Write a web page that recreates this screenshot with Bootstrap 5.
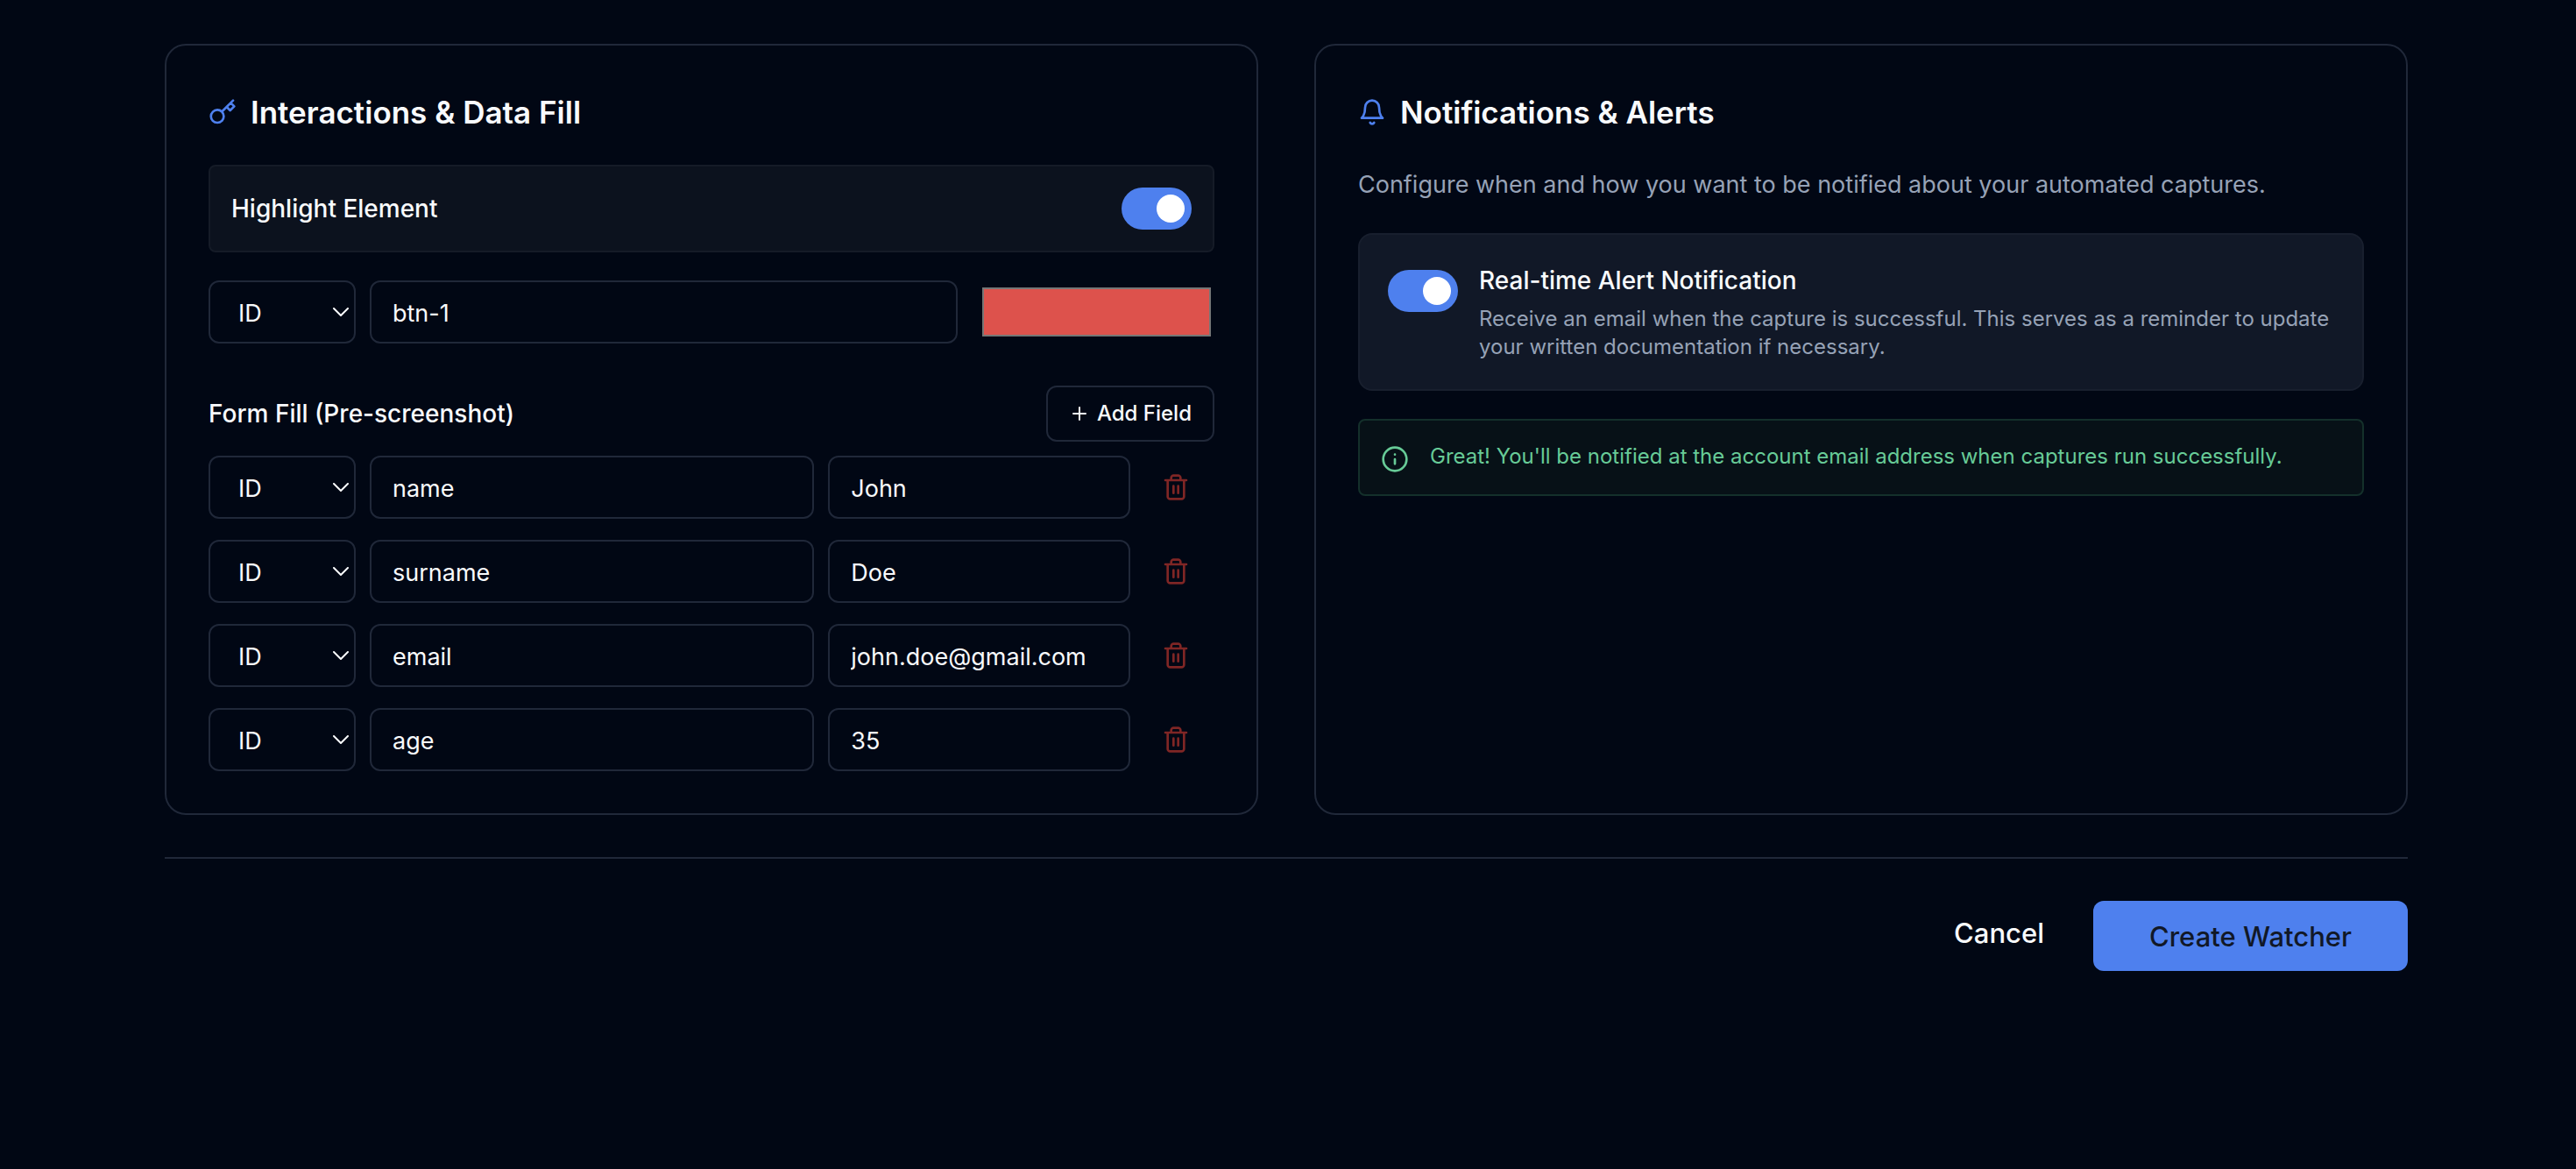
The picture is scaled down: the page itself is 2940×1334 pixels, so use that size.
<!DOCTYPE html>
<html lang="en" data-bs-theme="dark">
<head>
<meta charset="utf-8">
<meta name="viewport" content="width=device-width, initial-scale=1">
<title>Create Watcher</title>
<link href="https://cdn.jsdelivr.net/npm/bootstrap@5.3.0/dist/css/bootstrap.min.css" rel="stylesheet">
<style>
:root{--page:#010714;--line:#202839;--ink:#f8fafc;--soft:#96a2b6;--brand:#4e80ee}
body{background:var(--page);color:var(--ink);font-family:Inter,"Liberation Sans",sans-serif;font-size:28px;line-height:40px}
.page-shell{padding:50px 4px 48px 0}
.page-wrap{max-width:2560px}
.panels{--bs-gutter-x:64px;--bs-gutter-y:48px}
.panel{background:var(--page);border:2px solid var(--line);border-radius:24px}
.panel>.card-body{padding:48px}
.panel-title{gap:16px;font-size:35px;line-height:56px;font-weight:600;margin-bottom:32px;color:var(--ink)}
.panel-title svg{color:var(--brand)}
svg{flex:none;fill:none;stroke:currentColor;stroke-width:2;stroke-linecap:round;stroke-linejoin:round}
.toggle-row{background:#0c121e;border:2px solid #151b27;border-radius:8px;padding:24px;margin-bottom:32px;font-weight:500}
.form-switch .form-check-input.toggle{float:none;width:80px;height:48px;margin:0;border:0;border-radius:48px;background-color:var(--brand);background-size:48px 48px;background-image:url("data:image/svg+xml,%3csvg xmlns='http://www.w3.org/2000/svg' viewBox='0 0 48 48'%3e%3ccircle cx='24' cy='24' r='16' fill='%23fff'/%3e%3c/svg%3e")}
.field-row{gap:16px}
.form-control.field,.form-select.field{height:72px;padding:2px 24px 0;border:2px solid var(--line);border-radius:12px;background-color:var(--page);color:var(--ink);font-size:27px;line-height:40px;min-width:0}
.form-select.field{flex:none;width:168px;padding:4px 32px 0;background-size:18px 10px;background-position:right 6px center;background-image:url("data:image/svg+xml,%3csvg xmlns='http://www.w3.org/2000/svg' viewBox='0 0 18 10'%3e%3cpath fill='none' stroke='%23f8fafc' stroke-width='2' stroke-linecap='round' stroke-linejoin='round' d='M1 1l8 8 8-8'/%3e%3c/svg%3e")}
.field-target{flex:19 1 0}
.swatch-cell{flex:8 1 0;padding:0 4px 0 12px}
.swatch{width:100%;height:56px;padding:0;border:0;border-radius:0;background:none}
.swatch::-webkit-color-swatch-wrapper{padding:0}
.swatch::-webkit-color-swatch{border:2px solid #767676!important;border-radius:0}
.fill-head{margin:48px 0 16px;font-weight:500}
.btn-add{height:64px;padding:0 24px;gap:8px;border:2px solid var(--line);border-radius:12px;font-size:24px;line-height:32px;font-weight:500;color:var(--ink)}
.fill-rows{gap:24px}
.field-name{flex:14 1 0}
.field-value{flex:9 1 0}
.btn-trash{width:72px;height:72px;padding:0;margin-right:8px;border:0;color:#7f2625}
.intro{font-size:27px;line-height:46px;margin-bottom:32px;color:var(--soft)}
.notice{gap:24px;background:#111827;border:2px solid #181f2e;border-radius:16px;padding:32px;margin-bottom:32px}
.notice .toggle-holder{padding-top:8px}
.notice-title{font-weight:500}
.notice-text{margin-top:8px;font-size:24px;line-height:32px;color:var(--soft)}
.ok-note{gap:24px;background:#071117;border:2px solid #14302b;border-radius:8px;padding:24px;margin:0;font-size:24px;line-height:34px;color:#67cb97}
.ok-note svg{margin-top:4px}
.page-foot{gap:56px;margin-top:48px;padding-top:48px;border-top:2px solid var(--line)}
.btn-cancel{padding:0;border:0;font-size:31px;line-height:74px;font-weight:500;color:var(--ink)}
.btn-create{height:80px;padding:2px 64px 0;border:0;border-radius:12px;background:var(--brand);color:#111827;font-size:31px;line-height:48px;font-weight:500}
</style>
</head>
<body>
<svg class="d-none" aria-hidden="true">
  <symbol id="trash" viewBox="0 0 24 24"><path d="M3 6h18M19 6v14c0 1-1 2-2 2H7c-1 0-2-1-2-2V6M8 6V4c0-1 1-2 2-2h4c1 0 2 1 2 2v2M10 11v6M14 11v6"/></symbol>
</svg>
<main class="page-shell">
<form class="page-wrap mx-auto" onsubmit="return false">
  <div class="row panels">
    <section class="col-12 col-lg-6">
      <div class="card panel h-100"><div class="card-body">
        <h2 class="panel-title d-flex align-items-center">
          <svg width="32" height="32" viewBox="0 0 24 24" aria-hidden="true"><path d="m21 2-2 2m-7.61 7.61a5.5 5.5 0 1 1-7.778 7.778 5.5 5.5 0 0 1 7.777-7.777zm0 0L15.5 7.5m0 0 3 3L22 7l-3-3m-3.5 3.5L19 4"/></svg>
          <span>Interactions &amp; Data Fill</span>
        </h2>
        <div class="toggle-row form-switch d-flex align-items-center justify-content-between">
          <label for="highlight">Highlight Element</label>
          <input class="form-check-input toggle" type="checkbox" role="switch" id="highlight" checked>
        </div>
        <div class="field-row d-flex align-items-center">
          <select class="form-select field" aria-label="Highlight selector type"><option>ID</option><option>Class</option></select>
          <input class="form-control field field-target" type="text" value="btn-1" aria-label="Highlight selector">
          <div class="swatch-cell"><input class="swatch d-block" type="color" value="#dd524c" aria-label="Highlight colour"></div>
        </div>
        <div class="fill-head d-flex align-items-center justify-content-between">
          <span>Form Fill (Pre-screenshot)</span>
          <button type="button" class="btn btn-add d-flex align-items-center">
            <svg width="24" height="24" viewBox="0 0 24 24" aria-hidden="true"><path d="M5 12h14M12 5v14"/></svg>
            <span>Add Field</span>
          </button>
        </div>
        <div class="fill-rows d-flex flex-column">
          <div class="field-row d-flex align-items-center">
            <select class="form-select field" aria-label="Field 1 selector type"><option>ID</option><option>Class</option></select>
            <input class="form-control field field-name" type="text" value="name" aria-label="Field 1 selector">
            <input class="form-control field field-value" type="text" value="John" aria-label="Field 1 value">
            <button type="button" class="btn btn-trash flex-shrink-0" aria-label="Remove field 1"><svg width="32" height="32" aria-hidden="true"><use href="#trash"/></svg></button>
          </div>
          <div class="field-row d-flex align-items-center">
            <select class="form-select field" aria-label="Field 2 selector type"><option>ID</option><option>Class</option></select>
            <input class="form-control field field-name" type="text" value="surname" aria-label="Field 2 selector">
            <input class="form-control field field-value" type="text" value="Doe" aria-label="Field 2 value">
            <button type="button" class="btn btn-trash flex-shrink-0" aria-label="Remove field 2"><svg width="32" height="32" aria-hidden="true"><use href="#trash"/></svg></button>
          </div>
          <div class="field-row d-flex align-items-center">
            <select class="form-select field" aria-label="Field 3 selector type"><option>ID</option><option>Class</option></select>
            <input class="form-control field field-name" type="text" value="email" aria-label="Field 3 selector">
            <input class="form-control field field-value" type="text" value="john.doe@gmail.com" aria-label="Field 3 value">
            <button type="button" class="btn btn-trash flex-shrink-0" aria-label="Remove field 3"><svg width="32" height="32" aria-hidden="true"><use href="#trash"/></svg></button>
          </div>
          <div class="field-row d-flex align-items-center">
            <select class="form-select field" aria-label="Field 4 selector type"><option>ID</option><option>Class</option></select>
            <input class="form-control field field-name" type="text" value="age" aria-label="Field 4 selector">
            <input class="form-control field field-value" type="text" value="35" aria-label="Field 4 value">
            <button type="button" class="btn btn-trash flex-shrink-0" aria-label="Remove field 4"><svg width="32" height="32" aria-hidden="true"><use href="#trash"/></svg></button>
          </div>
        </div>
      </div></div>
    </section>
    <section class="col-12 col-lg-6">
      <div class="card panel h-100"><div class="card-body">
        <h2 class="panel-title d-flex align-items-center">
          <svg width="32" height="32" viewBox="0 0 24 24" aria-hidden="true"><path d="M6 8a6 6 0 0 1 12 0c0 7 3 9 3 9H3s3-2 3-9M10.3 21a1.94 1.94 0 0 0 3.4 0"/></svg>
          <span>Notifications &amp; Alerts</span>
        </h2>
        <p class="intro">Configure when and how you want to be notified about your automated captures.</p>
        <div class="notice form-switch d-flex align-items-start">
          <div class="toggle-holder d-flex"><input class="form-check-input toggle" type="checkbox" role="switch" id="realtime" aria-describedby="realtime-text" checked></div>
          <div>
            <label class="notice-title d-block" for="realtime">Real-time Alert Notification</label>
            <div class="notice-text" id="realtime-text">Receive an email when the capture is successful. This serves as a reminder to update your written documentation if necessary.</div>
          </div>
        </div>
        <div class="ok-note d-flex align-items-start" role="status">
          <svg width="32" height="32" viewBox="0 0 24 24" aria-hidden="true"><circle cx="12" cy="12" r="10"/><path d="M12 16v-4M12 8h.01"/></svg>
          <span>Great! You'll be notified at the account email address when captures run successfully.</span>
        </div>
      </div></div>
    </section>
  </div>
  <div class="page-foot d-flex justify-content-end align-items-start">
    <button type="button" class="btn btn-cancel">Cancel</button>
    <button type="submit" class="btn btn-create">Create Watcher</button>
  </div>
</form>
</main>
<script src="https://cdn.jsdelivr.net/npm/bootstrap@5.3.0/dist/js/bootstrap.bundle.min.js"></script>
</body>
</html>
